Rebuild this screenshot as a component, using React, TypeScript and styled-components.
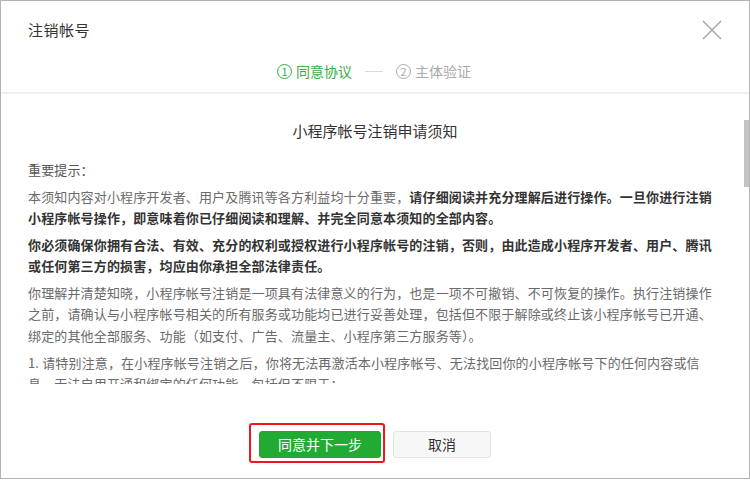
import styled, { createGlobalStyle } from 'styled-components';

const GlobalStyle = createGlobalStyle`
  html, body {
    margin: 0;
    padding: 0;
    background: #fff;
  }
  body {
    font-family: "Noto Sans CJK SC", "Liberation Sans", sans-serif;
  }
`;

type Step = { no: number; label: string; active?: boolean };

const steps: Step[] = [
  { no: 1, label: '同意协议', active: true },
  { no: 2, label: '主体验证' },
];

export default function App() {
  return (
    <>
      <GlobalStyle />
      <Dialog>
        <Header>
          <TitleRow>
            <DialogTitle>注销帐号</DialogTitle>
            <CloseButton aria-label="关闭">
              <svg width="20" height="20" viewBox="0 0 20 20">
                <path d="M1 1 L19 19 M19 1 L1 19" stroke="#a3a3a3" strokeWidth="1.4" fill="none" />
              </svg>
            </CloseButton>
          </TitleRow>
          <Steps>
            {steps.map((step, i) => (
              <StepGroup key={step.no}>
                {i > 0 && <StepDash />}
                <StepItem $active={step.active}>
                  <StepNo>{step.no}</StepNo>
                  <span>{step.label}</span>
                </StepItem>
              </StepGroup>
            ))}
          </Steps>
        </Header>

        <Body>
          <Notice>
            <NoticeTitle>小程序帐号注销申请须知</NoticeTitle>
            <Lead>重要提示：</Lead>
            <Para>
              本须知内容对小程序开发者、用户及腾讯等各方利益均十分重要，
              <Strong>
                请仔细阅读并充分理解后进行操作。一旦你进行注销
                <br />
                小程序帐号操作，即意味着你已仔细阅读和理解、并完全同意本须知的全部内容。
              </Strong>
            </Para>
            <Para $bold>
              你必须确保你拥有合法、有效、充分的权利或授权进行小程序帐号的注销，否则，由此造成小程序开发者、用户、腾讯
              <br />
              或任何第三方的损害，均应由你承担全部法律责任。
            </Para>
            <Para>
              你理解并清楚知晓，小程序帐号注销是一项具有法律意义的行为，也是一项不可撤销、不可恢复的操作。执行注销操作
              <br />
              之前，请确认与小程序帐号相关的所有服务或功能均已进行妥善处理，包括但不限于解除或终止该小程序帐号已开通、
              <br />
              绑定的其他全部服务、功能（如支付、广告、流量主、小程序第三方服务等）。
            </Para>
            <Para>
              1. 请特别注意，在小程序帐号注销之后，你将无法再激活本小程序帐号、无法找回你的小程序帐号下的任何内容或信
              <br />
              息，无法启用开通和绑定的任何功能，包括但不限于：
            </Para>
          </Notice>
          <ScrollThumb />
        </Body>

        <Footer>
          <PrimaryWrap>
            <Button $primary>同意并下一步</Button>
            <Marker />
          </PrimaryWrap>
          <Button>取消</Button>
        </Footer>
      </Dialog>
    </>
  );
}

const Dialog = styled.div`
  width: 750px;
  height: 479px;
  box-sizing: border-box;
  border: 1px solid #b3b3b3;
  background: #fff;
  display: flex;
  flex-direction: column;
`;

const Header = styled.header`
  flex: none;
  height: 93px;
  box-sizing: border-box;
  padding: 18px 27px 11px;
  border-bottom: 2px solid #efefef;
  display: flex;
  flex-direction: column;
  gap: 20px;
`;

const TitleRow = styled.div`
  height: 22px;
  display: flex;
  align-items: center;
  justify-content: space-between;
`;

const DialogTitle = styled.h1`
  margin: 0;
  font-size: 15px;
  line-height: 22px;
  font-weight: normal;
  letter-spacing: 0.5px;
  color: #333;
`;

const CloseButton = styled.button`
  width: 20px;
  height: 20px;
  padding: 0;
  border: 0;
  background: none;
  display: flex;
  margin-top: -1px;
`;

const Steps = styled.div`
  height: 20px;
  display: flex;
  align-items: center;
  justify-content: center;
  padding-right: 2px;
`;

const StepGroup = styled.div`
  display: flex;
  align-items: center;
`;

const StepItem = styled.div<{ $active?: boolean }>`
  display: flex;
  align-items: center;
  gap: 4px;
  font-size: 14px;
  line-height: 20px;
  color: ${(p) => (p.$active ? '#32b043' : '#aaaaaa')};
`;

const StepNo = styled.span`
  width: 13px;
  height: 13px;
  border: 1px solid currentColor;
  border-radius: 50%;
  display: flex;
  align-items: center;
  justify-content: center;
  font-size: 11px;
  line-height: 1;
`;

const StepDash = styled.span`
  width: 18px;
  height: 1px;
  margin: 0 13px;
  background: #dcdcdc;
`;

const Body = styled.section`
  position: relative;
  flex: none;
  height: 290px;
  overflow: hidden;
`;

const Notice = styled.div`
  padding: 26px 27px 0;
`;

const NoticeTitle = styled.h2`
  margin: 0 0 18px;
  font-size: 15px;
  line-height: 21px;
  font-weight: normal;
  text-align: center;
  color: #333;
`;

const Lead = styled.p`
  margin: 0 0 6px;
  font-size: 13px;
  line-height: 21px;
  letter-spacing: 0.15px;
  color: #555;
`;

const Para = styled.p<{ $bold?: boolean }>`
  margin: 0 0 5.5px;
  font-size: 13px;
  line-height: 21.3px;
  letter-spacing: 0.15px;
  white-space: nowrap;
  color: ${(p) => (p.$bold ? '#333' : '#6a6a6a')};
  font-weight: ${(p) => (p.$bold ? 'bold' : 'normal')};
`;

const Strong = styled.strong`
  color: #333;
`;

const ScrollThumb = styled.div`
  position: absolute;
  top: 26px;
  right: 0;
  width: 5px;
  height: 67px;
  background: #c3c3c3;
`;

const Footer = styled.footer`
  flex: 1;
  display: flex;
  justify-content: center;
  align-items: flex-start;
  gap: 12px;
  padding: 47px 0 0 0;
  box-sizing: border-box;
`;

const PrimaryWrap = styled.div`
  position: relative;
  display: flex;
`;

const Button = styled.button<{ $primary?: boolean }>`
  height: 27px;
  width: ${(p) => (p.$primary ? '122px' : '98px')};
  box-sizing: border-box;
  border-radius: 3px;
  border: 1px solid ${(p) => (p.$primary ? '#1fa62f' : '#e2e2e2')};
  background: ${(p) => (p.$primary ? '#22ab33' : '#f7f7f7')};
  color: ${(p) => (p.$primary ? '#fff' : '#333')};
  font-family: "Noto Sans CJK SC", sans-serif;
  font-size: 14px;
  line-height: 25px;
  padding: 0;
`;

const Marker = styled.span`
  position: absolute;
  top: -8px;
  left: -10px;
  right: -4px;
  bottom: -5px;
  border: 2px solid #f0141e;
  border-radius: 3px;
  pointer-events: none;
`;
